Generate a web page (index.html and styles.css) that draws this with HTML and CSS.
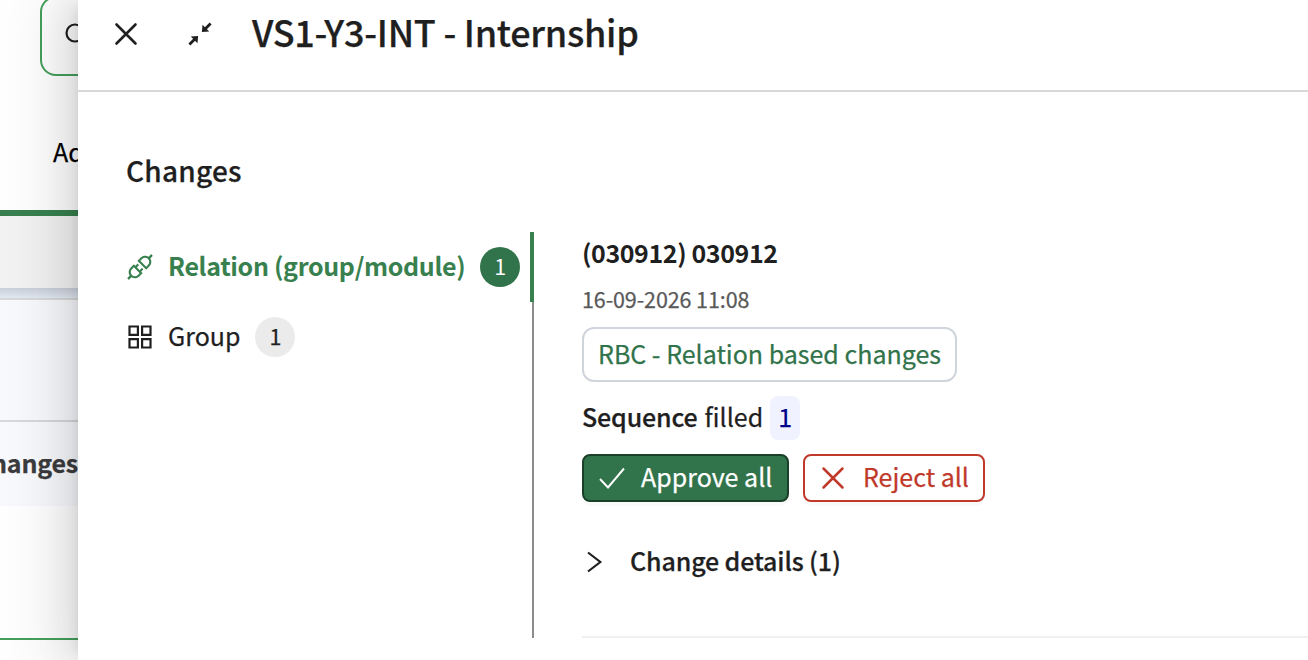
FILE: index.html
```
<!DOCTYPE html>
<html lang="en">
<head>
<meta charset="UTF-8">
<meta name="viewport" content="width=device-width, initial-scale=1.0">
<title>VS1-Y3-INT - Internship</title>
<link rel="stylesheet" href="styles.css">
</head>
<body>

<div class="page">
  <div class="page-top">
    <div class="search-box">
      <svg width="24" height="24" viewBox="0 0 24 24" fill="none" stroke="#1f1f1f" stroke-width="2.2"><circle cx="10" cy="10" r="8.500"/><path d="M16 16l6 6"/></svg>
    </div>
    <div class="page-tab">Add</div>
  </div>
  <div class="toolbar"></div>
  <div class="toolbar-shadow"></div>
  <div class="table-filter"></div>
  <div class="table-head"><span>Changes</span></div>
  <div class="table-body"></div>
</div>

<div class="drawer">
  <header class="drawer-header">
    <button class="icon-button close">
      <svg width="24" height="24" viewBox="0 0 24 24" fill="none" stroke="#1f1f1f" stroke-width="2.6" stroke-linecap="round"><path d="M2.500 2.500l19 19M21.500 2.500l-19 19"/></svg>
    </button>
    <button class="icon-button shrink">
      <svg width="24" height="24" viewBox="0 0 24 24" fill="none" stroke="#1f1f1f" stroke-width="2.800"><path d="M22.600 1.400l-6.500 6.500M1.400 22.600l6.500-6.500"/><path d="M14.500 2.800L13.900 10.100L21.200 9.500zM9.500 21.200L10.100 13.900L2.800 14.500z" fill="#1f1f1f" stroke="none"/></svg>
    </button>
    <h1>VS1-Y3-INT - Internship</h1>
  </header>

  <main class="drawer-body">
    <h2>Changes</h2>
    <div class="columns">
      <nav class="tabs">
        <div class="tab active">
          <svg width="28" height="28" viewBox="64 64 896 896" fill="#38814f"><path d="M917.7 148.8l-42.4-42.4c-1.6-1.6-3.6-2.3-5.7-2.3s-4.1.8-5.7 2.3l-76.1 76.1a199.27 199.27 0 00-112.1-34.3c-51.2 0-102.4 19.5-141.5 58.6L432.3 308.7a8.03 8.03 0 000 11.3L704 591.7c1.6 1.6 3.6 2.3 5.7 2.3 2 0 4.1-.8 5.7-2.3l101.9-101.9c68.9-69 77-175.7 24.3-253.5l76.1-76.1c3.1-3.2 3.1-8.3 0-11.400zM769.1 441.7l-59.4 59.4-186.8-186.8 59.4-59.4c24.9-24.9 58.1-38.7 93.4-38.7 35.3 0 68.4 13.7 93.4 38.7 24.9 24.9 38.7 58.1 38.7 93.4 0 35.3-13.8 68.4-38.7 93.4zm-190.2 105a8.03 8.03 0 00-11.3 0L501 613.3 410.7 523l66.7-66.7c3.1-3.1 3.1-8.2 0-11.3L441 408.6a8.03 8.03 0 00-11.3 0L363 475.3l-43-43a7.85 7.85 0 00-5.7-2.3c-2 0-4.1.8-5.7 2.3L206.8 534.2c-68.9 69-77 175.7-24.3 253.5l-76.1 76.1a8.03 8.03 0 000 11.3l42.4 42.4c1.6 1.6 3.6 2.3 5.7 2.3s4.1-.8 5.7-2.3l76.1-76.1c33.7 22.9 72.9 34.3 112.1 34.3 51.2 0 102.4-19.5 141.5-58.6l101.9-101.9c3.1-3.1 3.1-8.2 0-11.3l-43-43 66.7-66.7c3.1-3.1 3.1-8.2 0-11.3l-36.6-36.2zM441.7 769.1a131.32 131.32 0 01-93.4 38.700c-35.3 0-68.4-13.7-93.4-38.7a131.32 131.32 0 01-38.7-93.4c0-35.3 13.7-68.4 38.7-93.4l59.4-59.4 186.8 186.8-59.4 59.4z"/></svg>
          <span class="tab-label">Relation (group/module)</span>
          <span class="count">1</span>
        </div>
        <div class="tab">
          <svg width="28" height="28" viewBox="0 0 28 28" fill="none" stroke="#1f1f1f" stroke-width="2.200"><path d="M3.500 3.500h8.400v8.400H3.500zM16.100 3.500h8.400v8.400h-8.400zM3.500 16.100h8.400v8.400H3.500zM16.100 16.100h8.400v8.400h-8.400z"/></svg>
          <span class="tab-label">Group</span>
          <span class="count">1</span>
        </div>
      </nav>

      <section class="change">
        <h3>(030912) 030912</h3>
        <p class="date">16-09-2026 11:08</p>
        <span class="tag">RBC - Relation based changes</span>
        <p class="summary"><strong>Sequence</strong> <span class="filled">filled</span> <span class="value">1</span></p>
        <div class="actions">
          <button class="btn approve">
            <svg width="28" height="28" viewBox="0 0 28 28" fill="none" stroke="#fff" stroke-width="2"><path d="M2 15l8 8.500L26 4.500"/></svg>
            <span>Approve all</span>
          </button>
          <button class="btn reject">
            <svg width="28" height="28" viewBox="0 0 28 28" fill="none" stroke="#c0392b" stroke-width="2.500" stroke-linecap="round"><path d="M4.500 4.500l19 19M23.500 4.500l-19 19"/></svg>
            <span>Reject all</span>
          </button>
        </div>
        <div class="details">
          <svg width="24" height="24" viewBox="0 0 24 24" fill="none" stroke="#1f1f1f" stroke-width="2.200"><path d="M6 2.500L18.300 12L6 21.500"/></svg>
          <span>Change details (1)</span>
        </div>
      </section>
    </div>
  </main>
</div>

</body>
</html>
```
FILE: styles.css
```
* {
  box-sizing: border-box;
}
body {
  margin: 0;
  height: 660px;
  overflow: hidden;
  position: relative;
  font-family: "Noto Sans CJK SC", "Noto Sans", sans-serif;
  font-size: 25px;
  line-height: 44px;
  color: #1f1f1f;
  background: #fff;
  -webkit-text-stroke: 0.25px;
}
h1, h2, h3, p {
  margin: 0;
}
button {
  font: inherit;
  margin: 0;
  padding: 0;
}
svg {
  display: block;
  flex: none;
}

/* page behind the drawer */
.page {
  width: 130px;
}
.page-top {
  height: 216px;
  overflow: hidden;
  border-bottom: 6px solid #38814f;
  padding-left: 40px;
}
.search-box {
  height: 80px;
  width: 300px;
  margin-top: -4px;
  padding: 25px 0 0 23px;
  border: 2px solid #45a05c;
  border-radius: 16px;
}
.page-tab {
  padding: 53px 0 0 13px;
  color: #000;
}
.toolbar {
  height: 72px;
  background: #f3f3f3;
}
.toolbar-shadow {
  height: 12px;
  background: linear-gradient(#c9d0da, #e4eaf3);
  border-bottom: 2px solid #d9d9d9;
}
.table-filter {
  height: 122px;
  background: #f8fafd;
  border-bottom: 2px solid #d9d9d9;
}
.table-head {
  width: 78px;
  height: 84px;
  padding-bottom: 4px;
  background: #f8fafd;
  display: flex;
  justify-content: flex-end;
  align-items: center;
  font-weight: bold;
  color: #3c3c3e;
  letter-spacing: -0.2px;
}
.table-body {
  height: 134px;
  border-bottom: 2px solid #45a05c;
}

/* drawer */
.drawer {
  position: absolute;
  top: 0;
  left: 78px;
  right: 0;
  bottom: 0;
  background: #fff;
  box-shadow: -12px 0 32px 0 rgba(0, 0, 0, 0.08), -6px 0 12px -8px rgba(0, 0, 0, 0.14), -18px 0 56px 16px rgba(0, 0, 0, 0.07);
}
.drawer-header {
  height: 92px;
  border-bottom: 2px solid #d9d9d9;
  display: flex;
  align-items: center;
  padding: 0 0 22px 36px;
}
.icon-button {
  border: 0;
  background: none;
}
.shrink {
  margin: 0 40px 0 50px;
}
h1 {
  padding-bottom: 7px;
  font-size: 36px;
  font-weight: 500;
  letter-spacing: -0.27px;
}
.drawer-body {
  padding: 56px 0 0 48px;
}
h2 {
  font-size: 28px;
  font-weight: 500;
  letter-spacing: 0.25px;
}
.columns {
  display: flex;
  margin-top: 40px;
}
.tabs {
  width: 408px;
  height: 406px;
  background: linear-gradient(#8c8c8c, #8c8c8c) right / 2px 100% no-repeat;
}
.tab {
  height: 70px;
  display: flex;
  align-items: center;
}
.tab.active {
  border-right: 4px solid #38814f;
  color: #38814f;
  font-weight: bold;
  -webkit-text-stroke: 0;
}
.tab-label {
  margin-left: 14px;
  padding-bottom: 4px;
}
.active .tab-label {
  letter-spacing: -0.33px;
}
.count {
  width: 40px;
  height: 40px;
  margin-left: 15px;
  border-radius: 50%;
  background: #ebebeb;
  font-size: 21.5px;
  line-height: 37px;
  text-align: center;
}
.active .count {
  background: #31734a;
  color: #fff;
  font-weight: normal;
}
.change {
  flex: 1;
  margin-left: 48px;
  height: 406px;
  margin-top: -2px;
  padding-bottom: 0;
  height: 408px;
  border-bottom: 2px solid #f0f0f0;
}
h3 {
  font-size: 25px;
  font-weight: bold;
  letter-spacing: -0.4px;
  -webkit-text-stroke: 0;
}
.date {
  margin-top: 3px;
  font-size: 21.5px;
  letter-spacing: -0.1px;
  color: #595959;
}
.tag {
  display: block;
  width: 375px;
  height: 55px;
  margin-top: 6px;
  padding: 0 14px;
  border: 2px solid #d0d5dc;
  border-radius: 12px;
  line-height: 49px;
  color: #31734a;
  white-space: nowrap;
}
.summary {
  display: flex;
  margin-top: 14px;
  line-height: 40px;
}
.summary strong {
  font-weight: 500;
  letter-spacing: -0.15px;
}
.filled {
  margin-left: 7px;
}
.value {
  width: 30px;
  height: 44px;
  margin-left: 7px;
  border-radius: 8px;
  background: #f0f2ff;
  color: #00008b;
  text-align: center;
}
.actions {
  display: flex;
  gap: 14px;
  margin-top: 14px;
}
.btn {
  height: 48px;
  display: flex;
  align-items: center;
  padding: 0 14px;
  border: 2px solid;
  border-radius: 8px;
  box-shadow: 0 4px 0 rgba(0, 0, 0, 0.02);
  white-space: nowrap;
}
.btn span {
  margin-left: 15px;
  padding-bottom: 4px;
}
.approve {
  width: 207px;
  background: #31734a;
  border-color: #1b4029;
  color: #fff;
}
.reject {
  width: 182px;
  background: #fff;
  border-color: #c0392b;
  color: #c0392b;
}
.reject span {
  margin-left: 16px;
}
.details {
  display: flex;
  align-items: center;
  margin-top: 36px;
  font-weight: 500;
}
.details span {
  margin-left: 24px;
  padding-bottom: 4px;
  letter-spacing: -0.13px;
}
```
